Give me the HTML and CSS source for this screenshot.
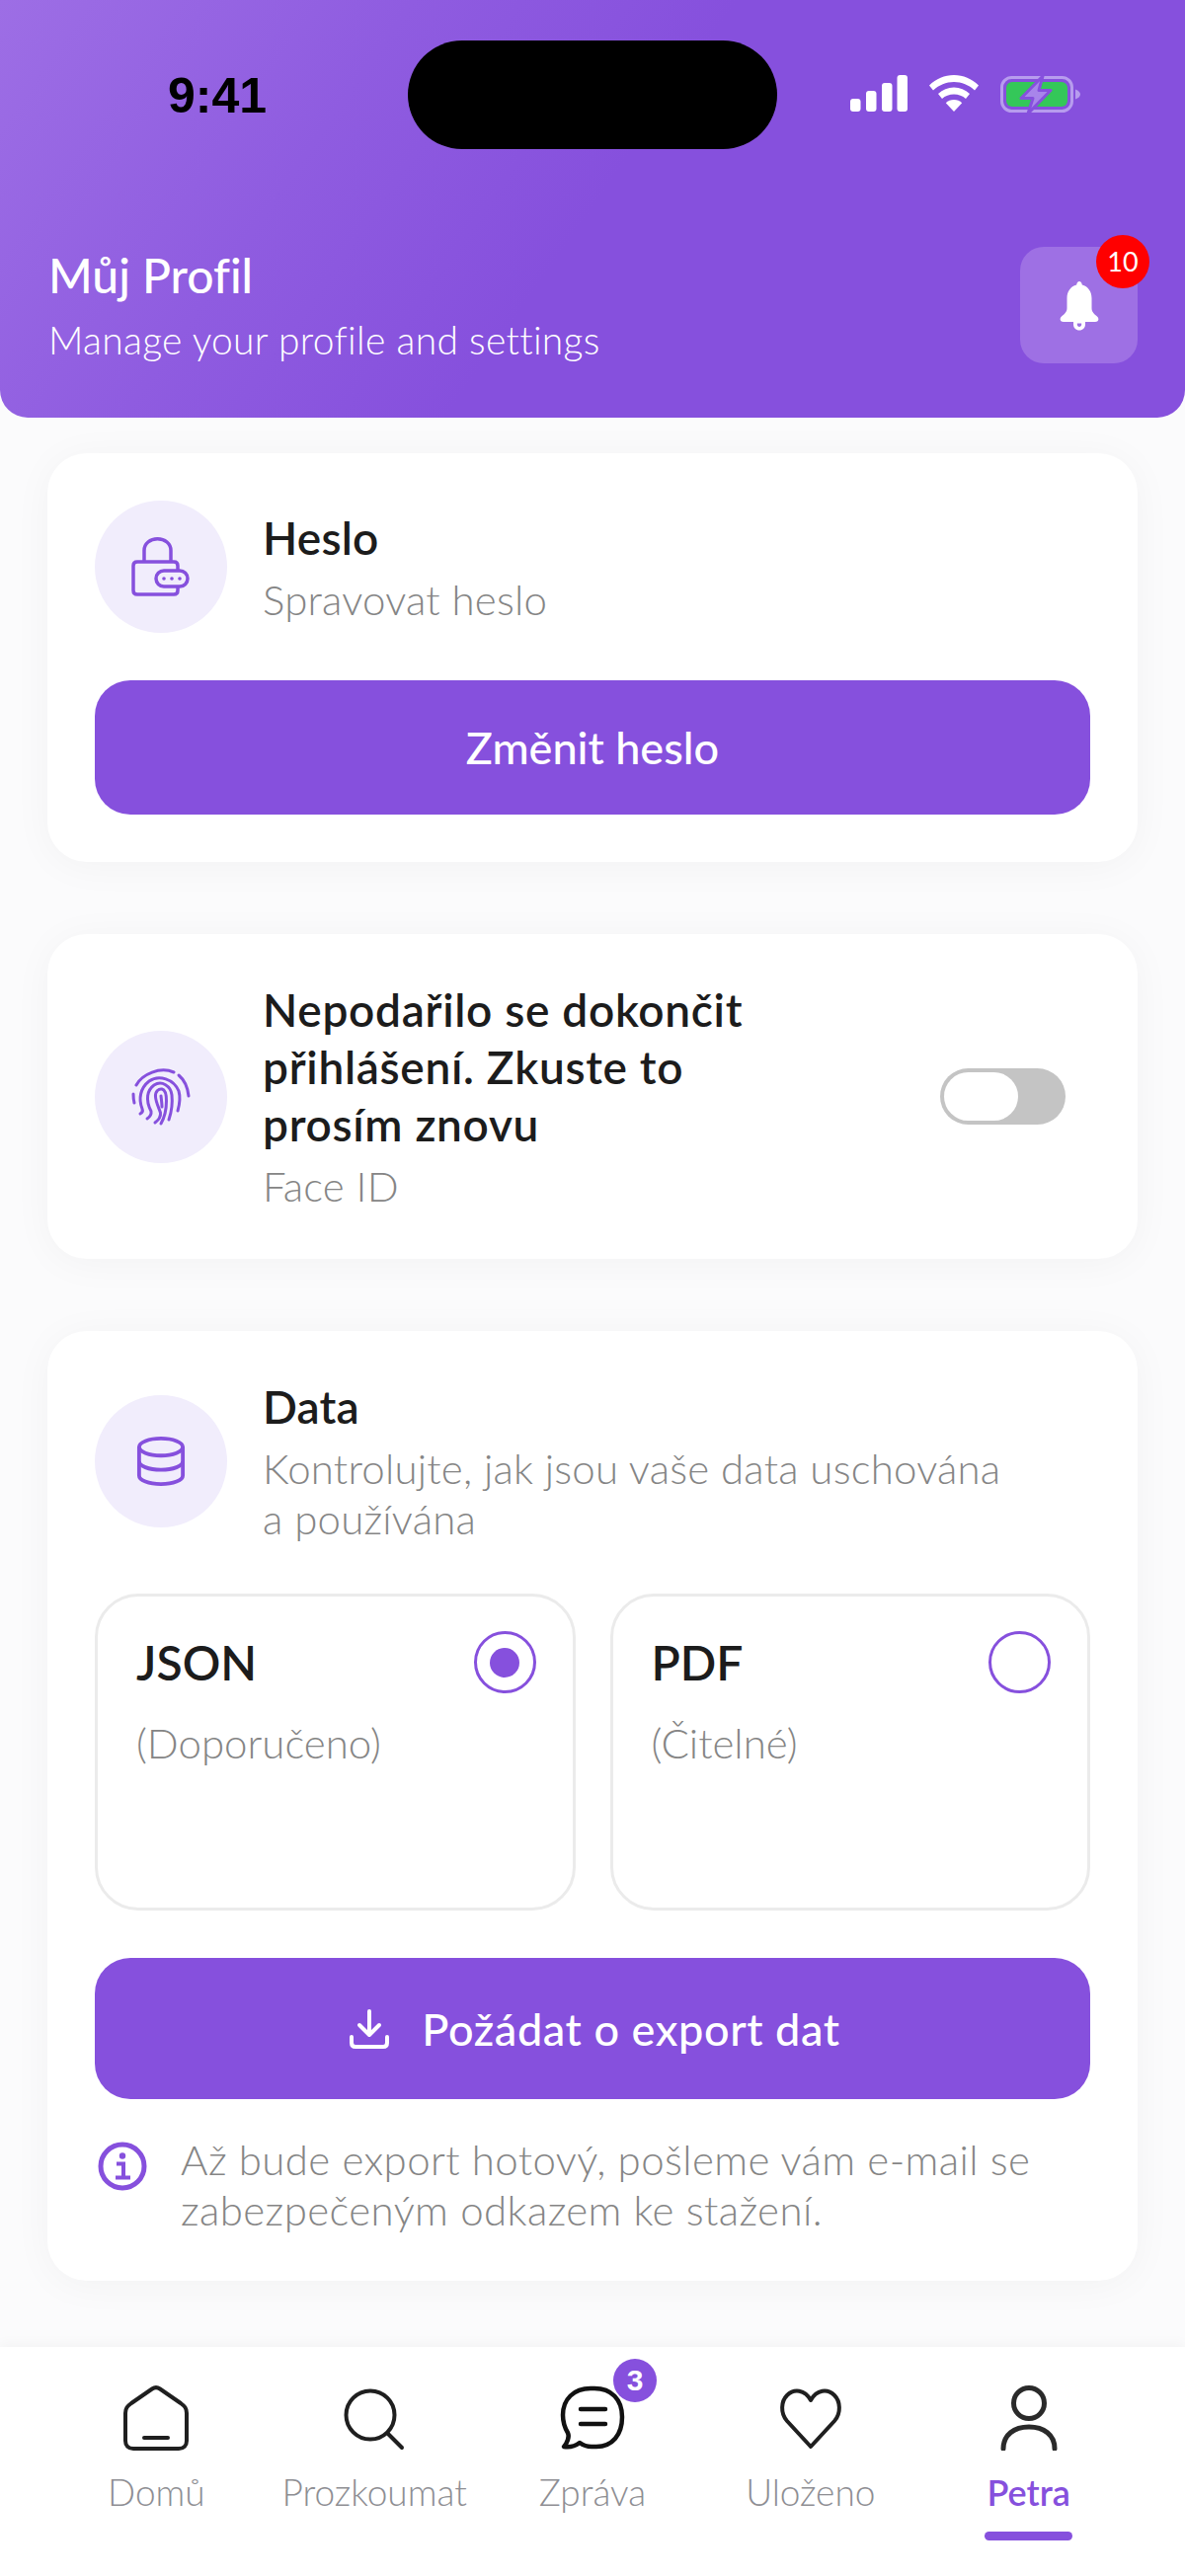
FILE: index.html
```html
<!DOCTYPE html>
<html lang="cs">
<head>
    <meta charset="UTF-8">
    <meta name="viewport" content="width=device-width, initial-scale=1.0">
    <title>Můj Profil</title>
    <link rel="stylesheet" href="styles.css">
</head>
<body>

    <!-- Header -->
    <header class="header">
        <div class="status-bar">
            <span class="status-time">9:41</span>
            <div class="island"></div>
            <div class="status-icons">
                <svg width="58" height="37" viewBox="0 0 58 37" fill="#fff">
                    <rect x="0" y="24" width="10.500" height="13" rx="3"/>
                    <rect x="16" y="16" width="10.500" height="21" rx="3"/>
                    <rect x="32" y="8" width="10.500" height="29" rx="3"/>
                    <rect x="47.500" y="0" width="10.500" height="37" rx="3"/>
                </svg>
                <svg width="50" height="37" viewBox="0 0 50 37" fill="#fff">
                    <path d="M25 0C15.500 0 7 3.700 0 10.500L4 15.500C10 10 17 7 25 7C33 7 40 10 46 15.500L50 10.500C43 3.700 34.500 0 25 0Z"/>
                    <path d="M25 12.500C19 12.500 13.500 14.800 9 19L13 24C16 21 20.500 19.500 25 19.500C29.500 19.500 34 21 37 24L41 19C36.500 14.800 31 12.500 25 12.500Z"/>
                    <path d="M25 25C21.800 25 19 26.100 16.800 28.200L25 37L33.200 28.200C31 26.100 28.200 25 25 25Z"/>
                </svg>
                <svg width="82" height="40" viewBox="0 0 82 40">
                    <rect x="1.500" y="2.500" width="71" height="34" rx="10" fill="none" stroke="#b79cee" stroke-width="3"/>
                    <rect x="6" y="7" width="62" height="25" rx="6" fill="#34c759"/>
                    <path d="M76 14.500C79 15.500 81 17.500 81 19.500C81 21.500 79 23.500 76 24.500Z" fill="#b79cee"/>
                    <path d="M43 1L21 23.500H33L28 39L51 15.500H39Z" fill="#a885ea" stroke="#8650dd" stroke-width="3" stroke-linejoin="round"/>
                </svg>
            </div>
        </div>
        <div class="header-row">
            <div>
                <h1 class="header-title">Můj Profil</h1>
                <p class="header-sub">Manage your profile and settings</p>
            </div>
            <div class="bell-box">
                <svg width="40" height="50" viewBox="0 0 40 50" fill="#fff">
                    <path d="M20 0C21.500 0 22.500 1.500 22.800 3.500C29 5 32.500 10.500 32.500 17V27C32.500 31 35 33 38 35.500C40.500 37.800 39.500 41 36 41H4C0.500 41 -0.500 37.800 2 35.500C5 33 7.500 31 7.500 27V17C7.500 10.500 11 5 17.200 3.500C17.500 1.500 18.500 0 20 0Z"/>
                    <path d="M14 41H26V43.500C26 47 23.500 49.500 20 49.500C16.500 49.500 14 47 14 43.500ZM17.800 43.500C17.800 45 18.700 46 20 46C21.300 46 22.200 45 22.200 43.500V42.500H17.800Z" fill-rule="evenodd"/>
                </svg>
                <span class="bell-badge">10</span>
            </div>
        </div>
    </header>

    <main class="content">

        <!-- Heslo -->
        <section class="card">
            <div class="card-head">
                <div class="icon-circle">
                    <svg width="60" height="60" viewBox="0 0 60 60" fill="none" stroke="#8650dd" stroke-width="3.500">
                        <path d="M13 25V13.500C13 6.500 19 1.800 26.500 1.800C34 1.800 40 6.500 40 13.500V25"/>
                        <path d="M47 33V29C47 26.500 45.500 25 43 25H6C3.500 25 2 26.500 2 29V54C2 56.500 3.500 58 6 58H43C45.500 58 47 56.500 47 54V50"/>
                        <rect x="25" y="34" width="32" height="16" rx="8"/>
                        <circle cx="33" cy="42" r="1.800" fill="#8650dd" stroke="none"/>
                        <circle cx="41" cy="42" r="1.800" fill="#8650dd" stroke="none"/>
                        <circle cx="49" cy="42" r="1.800" fill="#8650dd" stroke="none"/>
                    </svg>
                </div>
                <div class="card-text">
                    <h2 class="card-title">Heslo</h2>
                    <p class="card-sub">Spravovat heslo</p>
                </div>
            </div>
            <button class="btn btn-small">Změnit heslo</button>
        </section>

        <!-- Face ID -->
        <section class="card">
            <div class="card-head">
                <div class="icon-circle">
                    <svg width="60" height="60" viewBox="0 0 60 60" fill="none" stroke="#8650dd" stroke-width="3" stroke-linecap="round">
                        <path d="M2 27C2 30 2.200 33 3 36"/>
                        <path d="M5 18C11 7 29 -1 43 5"/>
                        <path d="M48 8C54 13 57 20 58 29"/>
                        <path d="M9 47C11 46 12 44.500 11 42C7 32 9 21 18 14C28 7 43 12 48 24C50 31 49 37 47 44"/>
                        <path d="M16 52C19 50 20.500 47.500 20 44.500C14 33 16 23 23 18C31 13 40 19 41 28C42 37 40 47 38 53"/>
                        <path d="M24 56C28 53 30 50 29.500 46C28 41 25 36 24.500 30C24 24 28 21.500 31 22C35 23 35.500 29 35.500 34C35.500 42 34 50 30 57"/>
                        <path d="M30 29C30.500 33 31 37 31 40"/>
                    </svg>
                </div>
                <div class="card-text">
                    <h2 class="card-title card-title-long">Nepodařilo se dokončit přihlášení. Zkuste to prosím znovu</h2>
                    <p class="card-sub">Face ID</p>
                </div>
                <div class="toggle"><div class="toggle-knob"></div></div>
            </div>
        </section>

        <!-- Data -->
        <section class="card card-data">
            <div class="card-head">
                <div class="icon-circle">
                    <svg width="50" height="50" viewBox="0 0 52 52" fill="none" stroke="#8650dd" stroke-width="4">
                        <ellipse cx="26" cy="11" rx="23" ry="9"/>
                        <path d="M3 11V41C3 46 13 50 26 50C39 50 49 46 49 41V11"/>
                        <path d="M3 26C3 31 13 35 26 35C39 35 49 31 49 26"/>
                    </svg>
                </div>
                <div class="card-text">
                    <h2 class="card-title">Data</h2>
                    <p class="card-sub">Kontrolujte, jak jsou vaše data uschována<br>a používána</p>
                </div>
            </div>
            <div class="options">
                <div class="option">
                    <div class="option-top">
                        <span class="option-name">JSON</span>
                        <span class="radio radio-on"></span>
                    </div>
                    <p class="option-note">(Doporučeno)</p>
                </div>
                <div class="option">
                    <div class="option-top">
                        <span class="option-name">PDF</span>
                        <span class="radio"></span>
                    </div>
                    <p class="option-note">(Čitelné)</p>
                </div>
            </div>
            <button class="btn btn-export">
                <svg width="40" height="40" viewBox="0 0 40 40" fill="none" stroke="#fff" stroke-width="4" stroke-linecap="round" stroke-linejoin="round">
                    <path d="M20 2V25M10 16L20 26L30 16"/>
                    <path d="M2 28V34C2 36.500 3.500 38 6 38H34C36.500 38 38 36.500 38 34V28"/>
                </svg>
                Požádat o export dat
            </button>
            <div class="info">
                <svg width="50" height="50" viewBox="0 0 50 50" fill="none" stroke="#8650dd" stroke-width="5">
                    <circle cx="25" cy="25" r="22"/>
                    <circle cx="25" cy="14.500" r="3.200" fill="#8650dd" stroke="none"/>
                    <path d="M19 22.500H26V36M18 36.500H33" stroke-width="4"/>
                </svg>
                <p class="info-text">Až bude export hotový, pošleme vám e-mail se zabezpečeným odkazem ke stažení.</p>
            </div>
        </section>

    </main>

    <!-- Bottom nav -->
    <nav class="nav">
        <div class="nav-item">
            <svg width="66" height="66" viewBox="0 0 66 66" fill="none" stroke="#1f1f1f" stroke-width="4" stroke-linecap="round" stroke-linejoin="round">
                <path d="M29 3.500C31.500 1.800 34.500 1.800 37 3.500L58 18C62 21 64 23 64 28V56C64 61 61 64 56 64H10C5 64 2 61 2 56V28C2 23 4 21 8 18Z"/>
                <path d="M21 53H45"/>
            </svg>
            <span class="nav-label">Domů</span>
        </div>
        <div class="nav-item">
            <svg width="66" height="66" viewBox="0 0 66 66" fill="none" stroke="#1f1f1f" stroke-width="4" stroke-linecap="round">
                <circle cx="29" cy="30" r="24.500"/>
                <path d="M47 49L61 63"/>
            </svg>
            <span class="nav-label">Prozkoumat</span>
        </div>
        <div class="nav-item">
            <div class="nav-icon-wrap">
                <svg width="66" height="66" viewBox="0 0 66 66" fill="none" stroke="#111" stroke-width="4.500" stroke-linecap="round" stroke-linejoin="round">
                    <path d="M35 3H31C14 3 3 14 3 30C3 37 5 43 8 48C9 50 9 52 8 55C7 58 6 60 4 62C10 63 16 61 20 58C24 61 27 62 32 62H37C53 62 63 50 63 32C63 14 52 3 35 3Z"/>
                    <path d="M21 24H46M21 39H46"/>
                </svg>
                <span class="nav-badge">3</span>
            </div>
            <span class="nav-label">Zpráva</span>
        </div>
        <div class="nav-item">
            <svg width="66" height="66" viewBox="0 0 66 66" fill="none" stroke="#1f1f1f" stroke-width="4" stroke-linejoin="round">
                <path d="M33 62L9 36C2 28 3 16 9 10C16 3 27 4 33 15C39 4 50 3 57 10C63 16 64 28 57 36Z"/>
            </svg>
            <span class="nav-label">Uloženo</span>
        </div>
        <div class="nav-item nav-active">
            <svg width="66" height="66" viewBox="0 0 66 66" fill="none" stroke="#2a2a2a" stroke-width="5" stroke-linecap="round">
                <ellipse cx="33" cy="18" rx="15.500" ry="15.500"/>
                <path d="M7 64C7 50 18 42 33 42C48 42 59 50 59 64"/>
            </svg>
            <span class="nav-label">Petra</span>
        </div>
    </nav>

</body>
</html>
```

FILE: styles.css
```css
/* General Styles */
* {
    box-sizing: border-box;
}

body {
    margin: 0;
    height: 2609px;
    display: flex;
    flex-direction: column;
    background-color: #fbfbfc;
    font-family: "Lato", "Liberation Sans", sans-serif;
    font-variant-ligatures: none;
    overflow: hidden;
}

h1, h2, p {
    margin: 0;
}

/* Header */
.header {
    height: 423px;
    padding: 41px 48px 55px 49px;
    display: flex;
    flex-direction: column;
    justify-content: space-between;
    background: linear-gradient(125deg, #9d6ee5 0%, #8f5ce0 28%, #8650dd 50%);
    border-radius: 0 0 28px 28px;
}

.status-bar {
    height: 110px;
    display: flex;
    align-items: center;
}

.status-time {
    width: 364px;
    padding: 2px 0 0 121px;
    font-family: "Liberation Sans", sans-serif;
    font-size: 50px;
    font-weight: 700;
    color: #000;
}

.island {
    width: 374px;
    height: 110px;
    border-radius: 55px;
    background: #000;
}

.status-icons {
    margin-left: 74px;
    display: flex;
    align-items: flex-start;
    gap: 22px;
}

.header-row {
    display: flex;
    justify-content: space-between;
    align-items: center;
}

.header-title {
    font-size: 48px;
    font-weight: 500;
    line-height: 58px;
    color: #fff;
}

.header-sub {
    margin-top: 12px;
    font-size: 39px;
    font-weight: 300;
    letter-spacing: 0.3px;
    line-height: 48px;
    color: #fff;
}

.bell-box {
    width: 119px;
    height: 118px;
    position: relative;
    display: flex;
    align-items: center;
    justify-content: center;
    padding-top: 2px;
    background: #9e70e4;
    border-radius: 24px;
}

.bell-badge {
    position: absolute;
    top: -12px;
    right: -12px;
    width: 54px;
    height: 54px;
    border-radius: 50%;
    background: #ff0000;
    color: #fff;
    font-size: 27px;
    line-height: 54px;
    text-align: center;
}

/* Cards */
.content {
    flex: 1;
    padding: 36px 48px 0;
    display: flex;
    flex-direction: column;
    gap: 73px;
}

.card {
    padding: 48px;
    background: #fff;
    border-radius: 40px;
    box-shadow: 0 4px 40px rgba(0, 0, 0, 0.04);
}

.card-data {
    padding-bottom: 46px;
}

.card-head {
    display: flex;
    align-items: center;
    gap: 36px;
}

.icon-circle {
    width: 134px;
    height: 134px;
    flex-shrink: 0;
    display: flex;
    align-items: center;
    justify-content: center;
    border-radius: 50%;
    background: #f1edfc;
}

.card-title {
    font-size: 46px;
    font-weight: 600;
    letter-spacing: 0.2px;
    line-height: 58px;
    color: #1c1c1c;
}

.card-title-long {
    width: 520px;
    letter-spacing: 0.7px;
}

.card-sub {
    margin-top: 8px;
    font-size: 42px;
    font-weight: 300;
    letter-spacing: 0.2px;
    line-height: 51px;
    color: #858585;
}

/* Toggle */
.toggle {
    width: 127px;
    height: 57px;
    margin-left: auto;
    margin-right: 25px;
    padding: 4px;
    flex-shrink: 0;
    background: #c4c4c4;
    border-radius: 29px;
}

.toggle-knob {
    width: 75px;
    height: 49px;
    background: #fff;
    border-radius: 25px;
}

/* Buttons */
.btn {
    width: 100%;
    border: none;
    display: flex;
    align-items: center;
    justify-content: center;
    gap: 33px;
    background: #8650dd;
    color: #fff;
    font-family: inherit;
    font-size: 45px;
    font-weight: 500;
    border-radius: 36px;
}

.btn-small {
    height: 136px;
    margin-top: 48px;
}

.btn-export {
    height: 143px;
    margin-top: 48px;
    padding-left: 11px;
    letter-spacing: 0.6px;
}

/* Export options */
.options {
    margin-top: 50px;
    display: grid;
    grid-template-columns: 1fr 1fr;
    gap: 35px;
}

.option {
    height: 321px;
    padding: 35px 37px 36px 39px;
    border: 3px solid #ebebeb;
    border-radius: 44px;
}

.option-top {
    display: flex;
    align-items: center;
    justify-content: space-between;
}

.option-name {
    font-size: 48px;
    font-weight: 600;
    color: #1c1c1c;
}

.radio {
    width: 63px;
    height: 63px;
    display: flex;
    align-items: center;
    justify-content: center;
    border: 3px solid #8650dd;
    border-radius: 50%;
}

.radio-on::after {
    content: "";
    width: 30px;
    height: 30px;
    border-radius: 50%;
    background: #8650dd;
}

.option-note {
    margin-top: 25px;
    font-size: 42px;
    font-weight: 300;
    line-height: 51px;
    color: #858585;
}

/* Info note */
.info {
    margin-top: 36px;
    display: flex;
    gap: 34px;
    padding-left: 3px;
}

.info svg {
    flex-shrink: 0;
    margin-top: 7px;
}

.info-text {
    font-size: 42px;
    font-weight: 300;
    letter-spacing: 0.4px;
    line-height: 51px;
    color: #858585;
}

/* Bottom nav */
.nav {
    height: 232px;
    padding: 39px 48px 0;
    display: grid;
    grid-template-columns: repeat(5, 1fr);
    background: #fff;
    box-shadow: 0 -4px 12px rgba(0, 0, 0, 0.03);
}

.nav-item {
    display: flex;
    flex-direction: column;
    align-items: center;
}

.nav-icon-wrap {
    position: relative;
    height: 66px;
}

.nav-badge {
    position: absolute;
    top: -27px;
    right: -32px;
    width: 44px;
    height: 44px;
    border-radius: 50%;
    background: #8650dd;
    color: #fff;
    font-family: "Liberation Sans", sans-serif;
    font-size: 30px;
    font-weight: 700;
    line-height: 44px;
    text-align: center;
}

.nav-label {
    margin-top: 20px;
    font-size: 37px;
    font-weight: 300;
    line-height: 44px;
    color: #8e8e93;
}

.nav-active .nav-label {
    font-size: 36px;
    color: #8650dd;
    font-weight: 600;
}

.nav-active::after {
    content: "";
    width: 89px;
    height: 9px;
    margin-top: 18px;
    border-radius: 5px;
    background: #8650dd;
}
```
